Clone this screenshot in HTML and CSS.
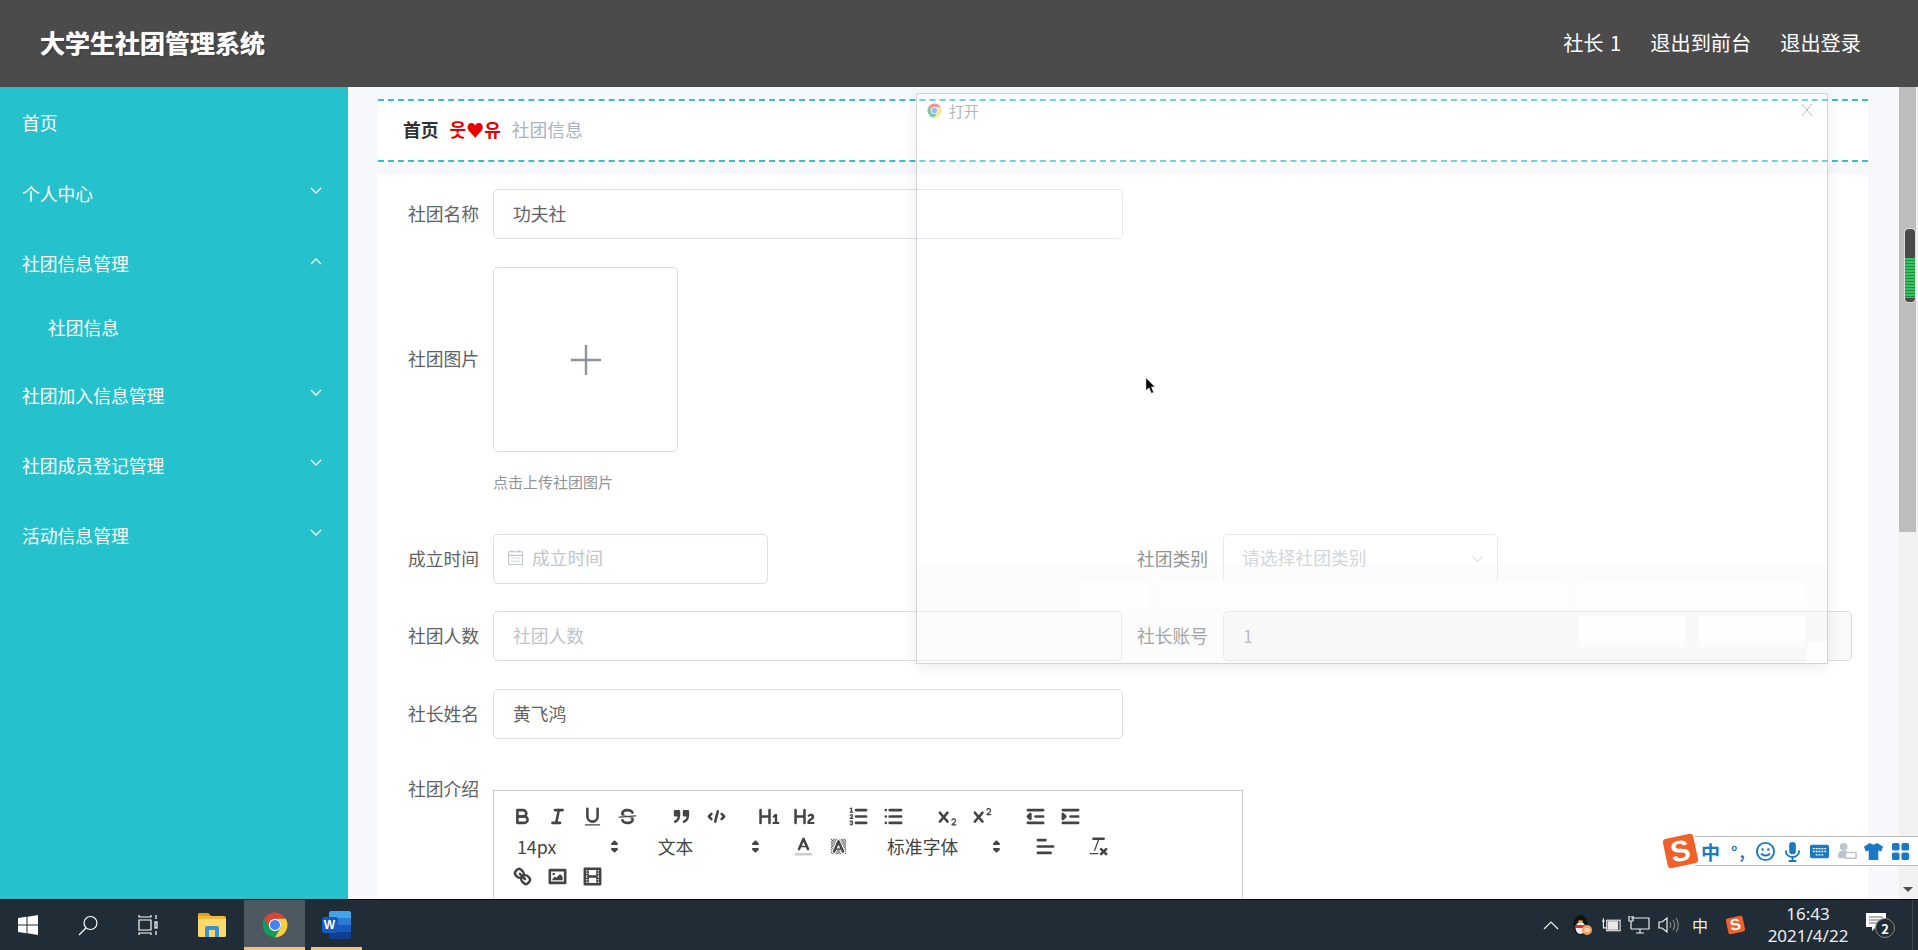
FILE: index.html
```html
<!DOCTYPE html>
<html lang="zh-CN">
<head>
    <meta charset="UTF-8">
    <title>大学生社团管理系统</title>
    <link rel="stylesheet" href="styles.css">
</head>
<body>
    <svg class="defs" width="0" height="0">
        <defs>
            <symbol id="chrome" viewBox="0 0 48 48">
                <path fill="#db4437" d="M24 4C17 4 10.300 7.900 6.700 14l8.640 15A10 10 0 0 1 24 14h17.300C37.700 7.900 31 4 24 4z"/>
                <path fill="#0f9d58" d="M6.700 14A20 20 0 0 0 24 44l8.660-15a10 10 0 0 1-17.320 0z"/>
                <path fill="#ffcd40" d="M41.300 14H24a10 10 0 0 1 8.660 15L24 44a20 20 0 0 0 17.300-30z"/>
                <circle cx="24" cy="24" r="10" fill="#f1f1f1"/>
                <circle cx="24" cy="24" r="8" fill="#4285f4"/>
            </symbol>
            <pattern id="hatch" width="2" height="2" patternUnits="userSpaceOnUse">
                <rect width="1" height="1" fill="#444"/>
                <rect x="1" y="1" width="1" height="1" fill="#444"/>
            </pattern>
        </defs>
    </svg>

    <div class="page">
        <header class="topbar">
            <div class="brand">大学生社团管理系统</div>
            <nav class="topnav">
                <span>社长 1</span>
                <span>退出到前台</span>
                <span>退出登录</span>
            </nav>
        </header>

        <div class="layout">
            <aside class="sidebar">
                <div class="menu-item first">首页</div>
                <div class="menu-item">个人中心<svg class="chev" viewBox="0 0 12 8"><polyline points="1,1 6,6 11,1"/></svg></div>
                <div class="menu-item">社团信息管理<svg class="chev" viewBox="0 0 12 8"><polyline points="1,7 6,2 11,7"/></svg></div>
                <div class="menu-item sub">社团信息</div>
                <div class="menu-item">社团加入信息管理<svg class="chev" viewBox="0 0 12 8"><polyline points="1,1 6,6 11,1"/></svg></div>
                <div class="menu-item">社团成员登记管理<svg class="chev" viewBox="0 0 12 8"><polyline points="1,1 6,6 11,1"/></svg></div>
                <div class="menu-item">活动信息管理<svg class="chev" viewBox="0 0 12 8"><polyline points="1,1 6,6 11,1"/></svg></div>
            </aside>

            <main class="content">
                <div class="breadcrumb">
                    <span class="crumb-home">首页</span>
                    <span class="crumb-sep">웃♥유</span>
                    <span class="crumb-now">社团信息</span>
                </div>

                <div class="form-card">
                    <div class="form-row single">
                        <label class="form-label">社团名称</label>
                        <div class="input wide">功夫社</div>
                    </div>

                    <div class="form-row upload-row">
                        <label class="form-label">社团图片</label>
                        <div class="upload">
                            <svg class="plus" viewBox="0 0 30 30"><path d="M15 0v30M0 15h30"/></svg>
                        </div>
                    </div>
                    <div class="hint">点击上传社团图片</div>

                    <div class="form-grid">
                        <div class="field">
                            <label class="form-label">成立时间</label>
                            <div class="input short placeholder date">
                                <svg class="cal" viewBox="0 0 16 16"><path d="M1.500 2.500h13v12h-13zM1.500 6h13M4.500 1v2.500M11.500 1v2.500M4 8.500h2M7 8.500h2M10 8.500h2M4 11.500h2M7 11.500h2M10 11.500h2"/></svg>
                                成立时间
                            </div>
                        </div>
                        <div class="field">
                            <label class="form-label">社团类别</label>
                            <div class="input short select placeholder date">
                                请选择社团类别
                                <svg class="select-arrow" viewBox="0 0 12 8"><polyline points="1,1 6,7 11,1"/></svg>
                            </div>
                        </div>
                        <div class="field">
                            <label class="form-label">社团人数</label>
                            <div class="input wide placeholder">社团人数</div>
                        </div>
                        <div class="field">
                            <label class="form-label">社长账号</label>
                            <div class="input wide disabled">1</div>
                        </div>
                    </div>

                    <div class="form-row single name-row">
                        <label class="form-label">社长姓名</label>
                        <div class="input wide">黄飞鸿</div>
                    </div>

                    <div class="form-row editor-row">
                        <label class="form-label">社团介绍</label>
                        <div class="editor">
                            <div class="ql-line">
                                <span class="ql-group">
                                    <svg class="ql" viewBox="0 0 18 18"><path d="M5,4H9.500A2.500,2.500,0,0,1,12,6.500v0A2.500,2.500,0,0,1,9.500,9H5A0,0,0,0,1,5,9V4A0,0,0,0,1,5,4Z"/><path d="M5,9h5.500A2.500,2.500,0,0,1,13,11.500v0A2.500,2.500,0,0,1,10.500,14H5a0,0,0,0,1,0,0V9A0,0,0,0,1,5,9Z"/></svg>
                                    <svg class="ql" viewBox="0 0 18 18"><line x1="7" x2="13" y1="4" y2="4"/><line x1="5" x2="11" y1="14" y2="14"/><line x1="8" x2="10" y1="14" y2="4"/></svg>
                                    <svg class="ql" viewBox="0 0 18 18"><path d="M5,3V9a4.012,4.012,0,0,0,4,4H9a4.012,4.012,0,0,0,4-4V3"/><rect class="f" height="1" rx="0.500" ry="0.500" width="12" x="3" y="15"/></svg>
                                    <svg class="ql" viewBox="0 0 18 18"><line class="thin" x1="15.500" x2="2.500" y1="8.500" y2="9.500"/><path class="f" d="M9.007,8C6.542,7.791,6,7.519,6,6.500,6,5.792,7.283,5,9,5c1.571,0,2.765.679,2.969,1.309a1,1,0,0,0,1.900-.617C13.356,4.106,11.354,3,9,3,6.200,3,4,4.538,4,6.500a3.200,3.200,0,0,0,.5,1.843Z"/><path class="f" d="M8.984,10C11.457,10.208,12,10.479,12,11.500c0,.708-1.283,1.500-3,1.500-1.571,0-2.765-.679-2.969-1.309a1,1,0,1,0-1.900.617C4.644,13.894,6.646,15,9,15c2.800,0,5-1.538,5-3.500a3.200,3.200,0,0,0-.5-1.843Z"/></svg>
                                </span>
                                <span class="ql-group">
                                    <svg class="ql" viewBox="0 0 18 18"><rect class="fs" height="3" width="3" x="4" y="5"/><rect class="fs" height="3" width="3" x="11" y="5"/><path d="M7,8c0,4.031-3,5-3,5"/><path d="M14,8c0,4.031-3,5-3,5"/></svg>
                                    <svg class="ql" viewBox="0 0 18 18"><polyline points="5 7 3 9 5 11"/><polyline points="13 7 15 9 13 11"/><line x1="10" x2="8" y1="5" y2="13"/></svg>
                                </span>
                                <span class="ql-group">
                                    <svg class="ql" viewBox="0 0 18 18"><path class="f" d="M10,4V14a1,1,0,0,1-2,0V10H3v4a1,1,0,0,1-2,0V4A1,1,0,0,1,3,4V8H8V4a1,1,0,0,1,2,0Zm6.068,9.209H14.990V7.599a.541.541,0,0,0-.605-.605h-.627a1.011,1.011,0,0,0-.748.297L11.645,8.566a.544.544,0,0,0-.022.858l.286.308a.539.539,0,0,0,.847.033l.099-.088a1.214,1.214,0,0,0,.242-.353h.022s-.011.309-.011.605V13.209H12.041a.541.541,0,0,0-.605.605v.439a.541.541,0,0,0,.605.605h4.027a.541.541,0,0,0,.605-.605v-.439A.541.541,0,0,0,16.068,13.209Z"/></svg>
                                    <svg class="ql" viewBox="0 0 18 18"><path class="f" d="M16.740,13.814v.439a.541.541,0,0,1-.605.605H11.855a.584.584,0,0,1-.649-.605V14.013c0-2.905,3.399-3.422,3.399-4.555a.777.777,0,0,0-.847-.781,1.177,1.177,0,0,0-.836.385c-.275.264-.561.374-.858.132l-.429-.341c-.308-.242-.385-.518-.154-.814a2.972,2.972,0,0,1,2.454-1.177,2.454,2.454,0,0,1,2.684,2.409c0,2.453-3.179,2.927-3.278,3.938h2.794A.541.541,0,0,1,16.740,13.814ZM9,3A1,1,0,0,0,8,4V8H3V4A1,1,0,0,0,1,4V14a1,1,0,0,0,2,0V10H8v4a1,1,0,0,0,2,0V4A1,1,0,0,0,9,3Z"/></svg>
                                </span>
                                <span class="ql-group">
                                    <svg class="ql" viewBox="0 0 18 18"><line x1="7" x2="15" y1="4" y2="4"/><line x1="7" x2="15" y1="9" y2="9"/><line x1="7" x2="15" y1="14" y2="14"/><line class="thin" x1="2.500" x2="4.500" y1="5.500" y2="5.500"/><path class="f" d="M3.500,6A0.500,0.500,0,0,1,3,5.500V3.085l-0.276.138A0.500,0.500,0,0,1,2.053,3c-0.124-.247-0.023-0.324.224-0.447l1-.5A0.500,0.500,0,0,1,4,2.500v3A0.500,0.500,0,0,1,3.500,6Z"/><path class="thin" d="M4.500,10.500h-2c0-.234,1.850-1.076,1.850-2.234A0.959,0.959,0,0,0,2.500,8.156"/><path class="thin" d="M2.500,14.846a0.959,0.959,0,0,0,1.850-.109A0.700,0.700,0,0,0,3.750,14a0.688,0.688,0,0,0,.6-0.736,0.959,0.959,0,0,0-1.850-.109"/></svg>
                                    <svg class="ql" viewBox="0 0 18 18"><line x1="6" x2="15" y1="4" y2="4"/><line x1="6" x2="15" y1="9" y2="9"/><line x1="6" x2="15" y1="14" y2="14"/><line x1="3" x2="3" y1="4" y2="4"/><line x1="3" x2="3" y1="9" y2="9"/><line x1="3" x2="3" y1="14" y2="14"/></svg>
                                </span>
                                <span class="ql-group">
                                    <svg class="ql" viewBox="0 0 18 18"><path class="f" d="M15.500,15H13.861a3.858,3.858,0,0,0,1.914-2.975,1.800,1.800,0,0,0-1.600-1.751A1.921,1.921,0,0,0,12.021,11.700a0.500,0.500,0,1,0,.957.291h0a0.914,0.914,0,0,1,1.053-.725,0.810,0.810,0,0,1,.744.762c0,1.076-1.170,1.870-1.940,2.431A1.456,1.456,0,0,0,12,15.500a0.500,0.500,0,0,0,.5.5h3A0.500,0.500,0,0,0,15.500,15Z"/><path class="f" d="M9.650,5.241a1,1,0,0,0-1.409.108L6,7.964,3.759,5.349A1,1,0,0,0,2.241,6.649L4.684,9.500,2.241,12.350A1,1,0,0,0,3.759,13.650L6,11.036,8.241,13.650a1,1,0,1,0,1.518-1.300L7.316,9.500,9.759,6.651A1,1,0,0,0,9.650,5.241Z"/></svg>
                                    <svg class="ql" viewBox="0 0 18 18"><path class="f" d="M15.500,7H13.861a4.015,4.015,0,0,0,1.914-2.975,1.800,1.800,0,0,0-1.600-1.751A1.922,1.922,0,0,0,12.021,3.700a0.500,0.500,0,1,0,.957.291,0.917,0.917,0,0,1,1.053-.725,0.810,0.810,0,0,1,.744.762c0,1.077-1.164,1.925-1.934,2.486A1.423,1.423,0,0,0,12,7.500a0.500,0.500,0,0,0,.5.5h3A0.500,0.500,0,0,0,15.500,7Z"/><path class="f" d="M9.651,5.241a1,1,0,0,0-1.410.108L6,7.964,3.759,5.349a1,1,0,1,0-1.519,1.300L4.683,9.500,2.241,12.350a1,1,0,1,0,1.519,1.300L6,11.036,8.241,13.650a1,1,0,0,0,1.519-1.300L7.317,9.500,9.759,6.651A1,1,0,0,0,9.651,5.241Z"/></svg>
                                </span>
                                <span class="ql-group">
                                    <svg class="ql" viewBox="0 0 18 18"><line x1="3" x2="15" y1="14" y2="14"/><line x1="3" x2="15" y1="4" y2="4"/><line x1="9" x2="15" y1="9" y2="9"/><polyline class="fs" points="5 7 5 11 3 9 5 7"/></svg>
                                    <svg class="ql" viewBox="0 0 18 18"><line x1="3" x2="15" y1="14" y2="14"/><line x1="3" x2="15" y1="4" y2="4"/><line x1="9" x2="15" y1="9" y2="9"/><polyline class="fs" points="3 7 3 11 5 9 3 7"/></svg>
                                </span>
                            </div>
                            <div class="ql-line">
                                <span class="ql-group">
                                    <span class="picker">14px<svg class="ql picker-arrow" viewBox="0 0 18 18"><polygon class="fs" points="7 11 9 13 11 11 7 11"/><polygon class="fs" points="7 7 9 5 11 7 7 7"/></svg></span>
                                </span>
                                <span class="ql-group">
                                    <span class="picker">文本<svg class="ql picker-arrow" viewBox="0 0 18 18"><polygon class="fs" points="7 11 9 13 11 11 7 11"/><polygon class="fs" points="7 7 9 5 11 7 7 7"/></svg></span>
                                </span>
                                <span class="ql-group">
                                    <svg class="ql" viewBox="0 0 18 18"><line class="label" x1="3" x2="15" y1="15" y2="15"/><polyline points="5.500 11 9 3 12.500 11"/><line class="thin" x1="11.630" x2="6.380" y1="9" y2="9"/></svg>
                                    <svg class="ql" viewBox="0 0 18 18"><rect class="hatched" x="3" y="3" width="12" height="12"/><polyline class="halo" points="5.500 13 9 5 12.500 13"/><polyline points="5.500 13 9 5 12.500 13"/><line class="thin" x1="11.630" x2="6.380" y1="11" y2="11"/></svg>
                                </span>
                                <span class="ql-group">
                                    <span class="picker font">标准字体<svg class="ql picker-arrow" viewBox="0 0 18 18"><polygon class="fs" points="7 11 9 13 11 11 7 11"/><polygon class="fs" points="7 7 9 5 11 7 7 7"/></svg></span>
                                </span>
                                <span class="ql-group">
                                    <svg class="ql" viewBox="0 0 18 18"><line x1="3" x2="15" y1="9" y2="9"/><line x1="3" x2="13" y1="14" y2="14"/><line x1="3" x2="9" y1="4" y2="4"/></svg>
                                </span>
                                <span class="ql-group">
                                    <svg class="ql" viewBox="0 0 18 18"><line x1="5" x2="13" y1="3" y2="3"/><line class="thin" x1="6" x2="9.350" y1="12" y2="3"/><line x1="11" x2="15" y1="11" y2="15"/><line x1="15" x2="11" y1="11" y2="15"/><rect class="f" height="1" rx="0.500" ry="0.500" width="7" x="2" y="14"/></svg>
                                </span>
                            </div>
                            <div class="ql-line">
                                <span class="ql-group">
                                    <svg class="ql" viewBox="0 0 18 18"><line x1="7" x2="11" y1="7" y2="11"/><path d="M8.900,4.577a3.476,3.476,0,0,1,.36,4.679A3.476,3.476,0,0,1,4.577,8.900C3.185,7.500,2.035,6.400,4.217,4.217S7.500,3.185,8.900,4.577Z"/><path d="M13.423,9.100a3.476,3.476,0,0,0-4.679-.36,3.476,3.476,0,0,0,.36,4.679c1.392,1.392,2.500,2.542,4.679.36S14.815,10.500,13.423,9.100Z"/></svg>
                                    <svg class="ql" viewBox="0 0 18 18"><rect height="10" width="12" x="3" y="4"/><circle class="f" cx="6" cy="7" r="1"/><polyline class="f" points="5 12 5 11 7 9 8 10 11 7 13 9 13 12 5 12"/></svg>
                                    <svg class="ql" viewBox="0 0 18 18"><rect height="12" width="12" x="3" y="3"/><rect class="f" height="12" width="1" x="5" y="3"/><rect class="f" height="12" width="1" x="12" y="3"/><rect class="f" height="2" width="8" x="5" y="8"/><rect class="f" height="1" width="3" x="3" y="5"/><rect class="f" height="1" width="3" x="3" y="7"/><rect class="f" height="1" width="3" x="3" y="10"/><rect class="f" height="1" width="3" x="3" y="12"/><rect class="f" height="1" width="3" x="12" y="5"/><rect class="f" height="1" width="3" x="12" y="7"/><rect class="f" height="1" width="3" x="12" y="10"/><rect class="f" height="1" width="3" x="12" y="12"/></svg>
                                </span>
                            </div>
                        </div>
                    </div>
                </div>
            </main>

            <div class="scrollbar">
                <div class="scroll-thumb"></div>
                <div class="scroll-arrow"></div>
                <div class="scroll-meter"><div class="scroll-green"></div></div>
            </div>
        </div>

        <!-- faded popup on its way in -->
        <div class="dialog">
            <div class="dialog-title">
                <svg class="dialog-icon"><use href="#chrome"/></svg>
                <span>打开</span>
                <svg class="dialog-close" viewBox="0 0 12 14"><path d="M1 1l10 12M11 1L1 13"/></svg>
            </div>
            <div class="dialog-foot">
                <div class="foot-row">
                    <div class="foot-box b1"></div>
                    <div class="foot-box b2"></div>
                    <div class="foot-box b3"></div>
                </div>
                <div class="foot-row end">
                    <div class="foot-box b4"></div>
                    <div class="foot-box b4"></div>
                </div>
                <div class="foot-corner"></div>
            </div>
        </div>

        <svg class="cursor" viewBox="0 0 12 19"><path d="M1 1v14l3.500-3 2.500 6 2.500-1-2.500-6H11z"/></svg>

        <div class="ime">
            <span class="ime-logo">S</span>
            <div class="ime-bar">
                <span class="ime-text">中</span>
                <span class="ime-text punct">°,</span>
                <svg class="ime-icon" viewBox="0 0 22 22"><circle class="o" cx="11" cy="11" r="9"/><circle class="b" cx="8" cy="9" r="1.300"/><circle class="b" cx="14" cy="9" r="1.300"/><path class="o" d="M6.500 13c1.500 3 7.500 3 9 0"/></svg>
                <svg class="ime-icon" viewBox="0 0 22 22"><rect class="b" x="7.500" y="1" width="7" height="13" rx="3.500"/><path class="o" d="M4 10c0 9 14 9 14 0M11 17v4M7 21h8"/></svg>
                <svg class="ime-icon" viewBox="0 0 22 22"><rect class="b" x="1" y="4" width="20" height="14" rx="2"/><path class="w" d="M4 8h14M4 11h14M7 14.500h8"/></svg>
                <svg class="ime-icon" viewBox="0 0 22 22"><circle class="g" cx="8" cy="6" r="4"/><path class="g" d="M2 17c0-5 2-7 6-7h3v8H4z"/><path class="gl" d="M10 12h11v6H10z"/></svg>
                <svg class="ime-icon" viewBox="0 0 22 22"><path class="b" d="M7 2l4 2 4-2 6 4-2 5-3-1v10H6V10l-3 1-2-5z"/></svg>
                <svg class="ime-icon" viewBox="0 0 22 22"><rect class="b" x="2" y="2" width="8" height="8" rx="2"/><rect class="b" x="12" y="2" width="8" height="8" rx="2"/><rect class="b" x="2" y="12" width="8" height="8" rx="2"/><rect class="b" x="12" y="12" width="8" height="8" rx="2"/></svg>
            </div>
        </div>
    </div>

    <footer class="taskbar">
        <div class="task-left">
            <div class="task-btn start">
                <svg class="win" viewBox="0 0 20 20"><path d="M0 3l8.500-1.200v7.700H0zM9.500 1.700L20 0v9.500H9.500zM0 10.500h8.500v7.700L0 17zM9.500 10.500H20V20L9.500 18.300z"/></svg>
            </div>
            <div class="task-btn find">
                <svg class="search" viewBox="0 0 20 20"><circle cx="12.500" cy="7.500" r="6.500"/><path d="M8 12.500L1 19.500"/></svg>
            </div>
            <div class="task-btn view">
                <svg class="taskview" viewBox="0 0 20 20"><path d="M1 0v2h12V0M1 20v-2h12v2M1 5h12v10H1zM18 0v4M18 16v4"/><rect x="17" y="7" width="2" height="6"/></svg>
            </div>
            <div class="task-btn folder">
                <svg class="app-icon" viewBox="0 0 28 24"><path fill="#f0b93a" d="M0 2a2 2 0 0 1 2-2h8l3 3h13a2 2 0 0 1 2 2v17a2 2 0 0 1-2 2H2a2 2 0 0 1-2-2z"/><path fill="#e0a020" d="M0 2a2 2 0 0 1 2-2h8l3 3H0z"/><path fill="#fbd96a" d="M0 6h28v16a2 2 0 0 1-2 2H2a2 2 0 0 1-2-2z"/><path fill="#3a8fd0" d="M7 15a2 2 0 0 1 2-2h10a2 2 0 0 1 2 2v9h-4v-7h-6v7H7z"/></svg>
            </div>
            <div class="task-btn active">
                <svg class="chrome-icon"><use href="#chrome"/></svg>
            </div>
            <div class="task-btn running">
                <div class="word">
                    <span class="word-sheet"></span>
                    <span class="word-badge">W</span>
                </div>
            </div>
        </div>

        <div class="tray">
            <svg class="tray-icon chev-up" viewBox="0 0 16 10"><polyline points="1,9 8,2 15,9"/></svg>
            <svg class="tray-icon qq" viewBox="0 0 20 22"><ellipse cx="8.500" cy="11" rx="7" ry="10" fill="#111"/><ellipse cx="8.500" cy="14" rx="5" ry="6" fill="#eee"/><path d="M3 11h11v3H3z" fill="#d8322a"/><ellipse cx="8.500" cy="7.500" rx="2.500" ry="1.300" fill="#f0b030"/><circle cx="15" cy="16" r="5" fill="#f0a060"/><path d="M12.500 15h5M12.500 17h5" stroke="#fff" stroke-width="1"/></svg>
            <svg class="tray-icon battery" viewBox="0 0 22 14"><path class="line" d="M1 3h3M2.500 0v6M2.500 6v4H6"/><rect class="line" x="6" y="2" width="14" height="11"/><rect x="7" y="3" width="11" height="9" fill="#e8e8e8"/></svg>
            <svg class="tray-icon monitor" viewBox="0 0 22 18"><path class="line" d="M3 2h18v11H3M12 13v4M8 17h8M1 0h4v5H1zM3 5v8"/></svg>
            <svg class="tray-icon speaker" viewBox="0 0 22 18"><path class="line" d="M1 6h3l5-4v14l-5-4H1z"/><path class="dim" d="M12 6c1 2 1 4 0 6M15 4c2 3 2 7 0 10M18 2c3 4 3 10 0 14"/></svg>
            <span class="tray-ime">中</span>
            <span class="ime-logo small">S</span>
            <div class="clock">
                <span>16:43</span>
                <span>2021/4/22</span>
            </div>
            <div class="notice">
                <svg class="notice-icon" viewBox="0 0 20 18"><path d="M0 0h20v14H10l-4 4v-4H0z"/><path class="notice-lines" d="M3 4h14M3 7h14M3 10h9"/></svg>
                <span class="notice-count">2</span>
            </div>
        </div>
    </footer>
</body>
</html>
```

FILE: styles.css
```css
/* base */
* {
    box-sizing: border-box;
}

body {
    margin: 0;
    width: 1918px;
    height: 950px;
    overflow: hidden;
    font-family: "Noto Sans CJK SC", "Noto Sans", sans-serif;
    font-size: 17.800px;
    color: #606266;
    background: #fff;
}

.defs {
    position: absolute;
}

.page {
    position: relative;
    height: 899px;
    display: flex;
    flex-direction: column;
    overflow: hidden;
}

/* top bar */
.topbar {
    flex: none;
    height: 87px;
    display: flex;
    align-items: center;
    justify-content: space-between;
    padding: 0 57px 3px 40px;
    background: #4b4b4b;
    color: #fff;
}

.brand {
    font-size: 25px;
    font-weight: bold;
    text-shadow: 0 0 1px #fff, 1px 1px 2px rgba(0, 0, 0, 0.4);
}

.topnav {
    display: flex;
    gap: 29px;
    font-size: 20.200px;
    word-spacing: 2px;
}

/* layout */
.layout {
    flex: 1;
    display: flex;
    min-height: 0;
}

.sidebar {
    flex: none;
    width: 348px;
    background: #25c2cd;
    color: #fff;
}

.menu-item {
    height: 70px;
    display: flex;
    align-items: center;
    justify-content: space-between;
    padding: 0 26px 3px 22px;
}

.menu-item.first {
    height: 72px;
}

.menu-item.sub {
    height: 58px;
    margin-bottom: 4px;
    padding-left: 48px;
}

.chev {
    width: 12px;
    height: 8px;
    margin-bottom: 4px;
    fill: none;
    stroke: #fff;
    stroke-width: 1.300;
}

.content {
    flex: 1;
    min-width: 0;
    padding: 12px 31px 0 30px;
    background: #f6f8fb;
    overflow: hidden;
}

/* breadcrumb */
.breadcrumb {
    height: 63px;
    display: flex;
    align-items: center;
    gap: 11px;
    padding: 0 0 3px 25px;
    background: #fff;
    border-top: 2px dashed #33bfcb;
    border-bottom: 2px dashed #33bfcb;
}

.crumb-home {
    font-weight: bold;
    color: #303133;
}

.crumb-sep {
    color: #e60000;
    font-size: 18px;
    font-weight: bold;
    white-space: nowrap;
}

.crumb-now {
    color: #a8b2c4;
}

/* form */
.form-card {
    height: 800px;
    margin-top: 12px;
    padding: 15px 16px 0 30px;
    background: #fff;
}

.form-row,
.field {
    display: flex;
    align-items: center;
}

.form-label {
    flex: none;
    width: 70px;
    margin-right: 15px;
    padding-bottom: 3px;
    white-space: nowrap;
}

.input {
    height: 50px;
    display: flex;
    align-items: center;
    padding: 0 19px 3px;
    border: 1px solid #dcdfe6;
    border-radius: 5px;
    background: #fff;
}

.input.wide {
    flex: 1;
}

.input.short {
    width: 275px;
}

.input.date {
    padding-bottom: 5px;
}

.single .input.wide {
    flex: none;
    width: 630px;
}

.placeholder {
    color: #c0c4cc;
}

.disabled {
    background: #f9f9fa;
    color: #909399;
}

.select {
    justify-content: space-between;
    padding-left: 18px;
    padding-right: 13px;
}

.select-arrow {
    width: 13px;
    height: 8px;
    margin-top: 5px;
    fill: none;
    stroke: #c0c4cc;
    stroke-width: 1;
}

.cal {
    width: 17px;
    height: 17px;
    margin: 2px 8px 0 -6px;
    fill: none;
    stroke: #c0c4cc;
    stroke-width: 1;
}

.upload-row {
    margin-top: 28px;
}

.upload {
    width: 185px;
    height: 185px;
    display: flex;
    align-items: center;
    justify-content: center;
    border: 1px solid #dcdfe6;
    border-radius: 5px;
}

.plus {
    width: 30px;
    height: 30px;
    fill: none;
    stroke: #8c939d;
    stroke-width: 2.400;
}

.hint {
    margin: 19px 0 0 85px;
    font-size: 15px;
    line-height: 22px;
    color: #909399;
}

.form-grid {
    margin-top: 41px;
    display: grid;
    grid-template-columns: 714px 715px;
    column-gap: 15px;
    row-gap: 27px;
}

.form-grid .field:nth-child(even) .form-label {
    margin-right: 16px;
}

.name-row {
    margin-top: 28px;
}

/* quill toolbar */
.editor-row {
    align-items: flex-start;
    margin-top: 24px;
}

.editor-row .form-label {
    line-height: 50px;
}

.editor {
    width: 750px;
    height: 200px;
    margin-top: 27px;
    padding: 10px 9px 10px 11px;
    border: 1px solid #ccc;
}

.ql-line {
    display: flex;
    gap: 18.700px;
    height: 30px;
}

.ql-group {
    display: flex;
    align-items: center;
}

.ql {
    flex: none;
    width: 23px;
    height: 23px;
    margin: 0 6px;
}

.ql * {
    fill: none;
    stroke: #444;
    stroke-width: 2;
    stroke-linecap: round;
    stroke-linejoin: round;
}

.ql .f {
    fill: #444;
    stroke: none;
}

.ql .fs {
    fill: #444;
}

.ql .thin {
    stroke-width: 1;
}

.ql .label {
    stroke: #ccc;
}

.ql .hatched {
    fill: url(#hatch);
    stroke: none;
}

.ql .halo {
    stroke: #fff;
    stroke-width: 3.500;
}

.picker {
    width: 122px;
    display: flex;
    align-items: center;
    justify-content: space-between;
    padding-left: 12px;
    color: #444;
}

.picker.font {
    width: 134px;
}

.ql.picker-arrow {
    margin: 0 1px 0 0;
}

.ql.picker-arrow * {
    stroke-width: 1.500;
}

/* translucent window */
.dialog {
    position: absolute;
    left: 916px;
    top: 93px;
    width: 912px;
    height: 571px;
    display: flex;
    flex-direction: column;
    justify-content: space-between;
    background: rgba(255, 255, 255, 0.3);
    border: 1px solid rgba(170, 170, 170, 0.5);
    box-shadow: 0 3px 14px rgba(0, 0, 0, 0.08);
}

.dialog-title {
    height: 32px;
    display: flex;
    align-items: center;
    gap: 6px;
    padding: 0 14px 0 9px;
    font-size: 15px;
    color: #b5b5b5;
}

.dialog-icon {
    width: 17px;
    height: 17px;
    opacity: 0.55;
}

.dialog-close {
    width: 12px;
    height: 14px;
    margin-left: auto;
    fill: none;
    stroke: #bbb;
    stroke-width: 1;
}

.dialog-foot {
    position: relative;
    height: 97px;
    padding: 15px 22px 0 161px;
    background: rgba(240, 240, 240, 0.2);
}

.foot-row {
    display: flex;
    gap: 11px;
}

.foot-row.end {
    justify-content: flex-end;
    gap: 14px;
    margin-top: 9px;
}

.foot-box {
    height: 26px;
    background: rgba(255, 255, 255, 0.75);
}

.b1 {
    width: 70px;
}

.b2 {
    width: 407px;
    margin-right: 1px;
}

.b3 {
    width: 227px;
}

.b4 {
    width: 106px;
    height: 31px;
}

.foot-corner {
    position: absolute;
    right: 0;
    bottom: 0;
    width: 20px;
    height: 21px;
    background: rgba(255, 255, 255, 0.75);
}

.cursor {
    position: absolute;
    left: 1145px;
    top: 376px;
    width: 11px;
    height: 19px;
    fill: #000;
    stroke: #fff;
    stroke-width: 0.600;
}

/* scrollbar */
.scrollbar {
    position: relative;
    flex: none;
    width: 19px;
    background: #f1f1f1;
}

.scroll-thumb {
    width: 17px;
    height: 445px;
    background: #bdbdbd;
}

.scroll-arrow {
    position: absolute;
    left: 4px;
    bottom: 7px;
    border-top: 5px solid #505050;
    border-left: 5px solid transparent;
    border-right: 5px solid transparent;
}

.scroll-meter {
    position: absolute;
    left: 6px;
    top: 142px;
    width: 10px;
    height: 73px;
    padding-top: 29px;
    background: #4a4a4a;
    border-radius: 4px;
    box-shadow: 0 0 0 1px #ddd;
}

.scroll-green {
    height: 40px;
    background: repeating-linear-gradient(#37c25f 0, #37c25f 2px, #1f8d44 2px, #1f8d44 3px);
}

/* sogou bar */
.ime {
    position: absolute;
    right: 0;
    top: 836px;
    display: flex;
    align-items: center;
}

.ime-logo {
    position: relative;
    z-index: 1;
    width: 31px;
    height: 30px;
    display: flex;
    align-items: center;
    justify-content: center;
    background: #f0602a;
    border-radius: 4px;
    transform: rotate(-12deg);
    color: #fff;
    font-family: "Liberation Sans", sans-serif;
    font-size: 29px;
    font-weight: bold;
}

.ime-bar {
    width: 223px;
    height: 30px;
    display: flex;
    align-items: center;
    gap: 6px;
    padding-left: 6px;
    margin-left: -1px;
    background: #fff;
    border-top: 1px solid #bbb;
    border-bottom: 1px solid #bbb;
}

.ime-text {
    width: 18px;
    color: #1b78c2;
    font-size: 19px;
    font-weight: bold;
    line-height: 1;
    white-space: nowrap;
}

.ime-text.punct {
    margin-left: 6px;
    font-size: 16px;
    letter-spacing: 2px;
}

.ime-icon {
    flex: none;
    width: 21px;
    height: 21px;
}

.ime-icon .o {
    fill: none;
    stroke: #1b78c2;
    stroke-width: 2;
}

.ime-icon .b {
    fill: #1b78c2;
}

.ime-icon .w {
    fill: none;
    stroke: #fff;
    stroke-width: 1.500;
    stroke-dasharray: 2 1;
}

.ime-icon .g {
    fill: #bcc3cb;
}

.ime-icon .gl {
    fill: #fff;
    stroke: #bcc3cb;
    stroke-width: 1.500;
}

/* windows taskbar */
.taskbar {
    height: 51px;
    display: flex;
    justify-content: space-between;
    background: #202c36;
    border-top: 1px solid #0a0a0a;
    color: #eee;
}

.task-left {
    display: flex;
}

.task-btn {
    display: flex;
    align-items: center;
    justify-content: center;
}

.task-btn.start {
    width: 56px;
}

.task-btn.find {
    width: 64px;
}

.task-btn.view {
    width: 55px;
}

.task-btn.folder {
    width: 69px;
    padding-left: 5px;
}

.task-btn.active {
    width: 61px;
    background: #4d5860;
    border-bottom: 3px solid #f5c07a;
}

.task-btn.running {
    margin-left: 6px;
    width: 51px;
    border-bottom: 3px solid #f5c07a;
}

.win {
    width: 20px;
    height: 20px;
    fill: #fff;
}

.search {
    width: 20px;
    height: 21px;
    fill: none;
    stroke: #fff;
    stroke-width: 1.200;
}

.taskview {
    width: 20px;
    height: 20px;
    fill: none;
    stroke: #fff;
    stroke-width: 1.200;
}

.app-icon {
    width: 28px;
    height: 24px;
}

.chrome-icon {
    width: 30px;
    height: 30px;
    margin: 3px 0 0;
}

.word {
    position: relative;
    width: 30px;
    height: 28px;
    margin-top: 3px;
}

.word-sheet {
    position: absolute;
    left: 7px;
    top: 0;
    width: 22px;
    height: 28px;
    background: linear-gradient(#41a5ee 0 25%, #2b7cd3 25% 50%, #185abd 50% 75%, #103f91 75%);
    border-radius: 2px;
}

.word-badge {
    position: absolute;
    left: 0;
    top: 6px;
    width: 16px;
    height: 16px;
    display: flex;
    align-items: center;
    justify-content: center;
    background: #185abd;
    border-radius: 2px;
    color: #fff;
    font-family: "Liberation Sans", sans-serif;
    font-size: 12px;
    font-weight: bold;
}

.tray {
    position: relative;
    width: 380px;
    height: 100%;
    display: flex;
    align-items: center;
}

.tray::after {
    content: "";
    position: absolute;
    right: 5px;
    top: 0;
    bottom: 0;
    width: 1px;
    background: #3c4852;
}

.tray-icon {
    flex: none;
}

.tray .line {
    fill: none;
    stroke: #eee;
    stroke-width: 1.200;
}

.tray .dim {
    fill: none;
    stroke: #888;
    stroke-width: 1.200;
}

.chev-up {
    width: 16px;
    height: 10px;
    margin-left: 5px;
    fill: none;
    stroke: #eee;
    stroke-width: 1.200;
}

.qq {
    width: 20px;
    height: 22px;
    margin-left: 13px;
}

.battery {
    width: 21px;
    height: 14px;
    margin-left: 9px;
}

.monitor {
    width: 22px;
    height: 18px;
    margin-left: 6px;
}

.speaker {
    width: 22px;
    height: 18px;
    margin-left: 8px;
}

.tray-ime {
    width: 18px;
    margin-left: 12px;
    font-size: 16px;
}

.ime-logo.small {
    width: 17px;
    height: 16px;
    margin-left: 17px;
    font-size: 16px;
    border-radius: 2px;
}

.clock {
    width: 80px;
    margin-left: 24px;
    display: flex;
    flex-direction: column;
    align-items: center;
    gap: 4px;
    font-size: 17px;
    line-height: 18px;
    font-family: "Noto Sans", sans-serif;
    white-space: nowrap;
}

.notice {
    position: relative;
    width: 26px;
    height: 30px;
    margin-left: 18px;
}

.notice-icon {
    width: 20px;
    height: 18px;
    margin-top: 2px;
    fill: #fff;
}

.notice-lines {
    fill: none;
    stroke: #666;
    stroke-width: 1;
}

.notice-count {
    position: absolute;
    left: 9px;
    top: 8px;
    width: 20px;
    height: 20px;
    display: flex;
    align-items: center;
    justify-content: center;
    background: #202c36;
    border: 1px solid #888;
    border-radius: 50%;
    font-size: 13px;
    font-weight: bold;
    color: #fff;
}
```
